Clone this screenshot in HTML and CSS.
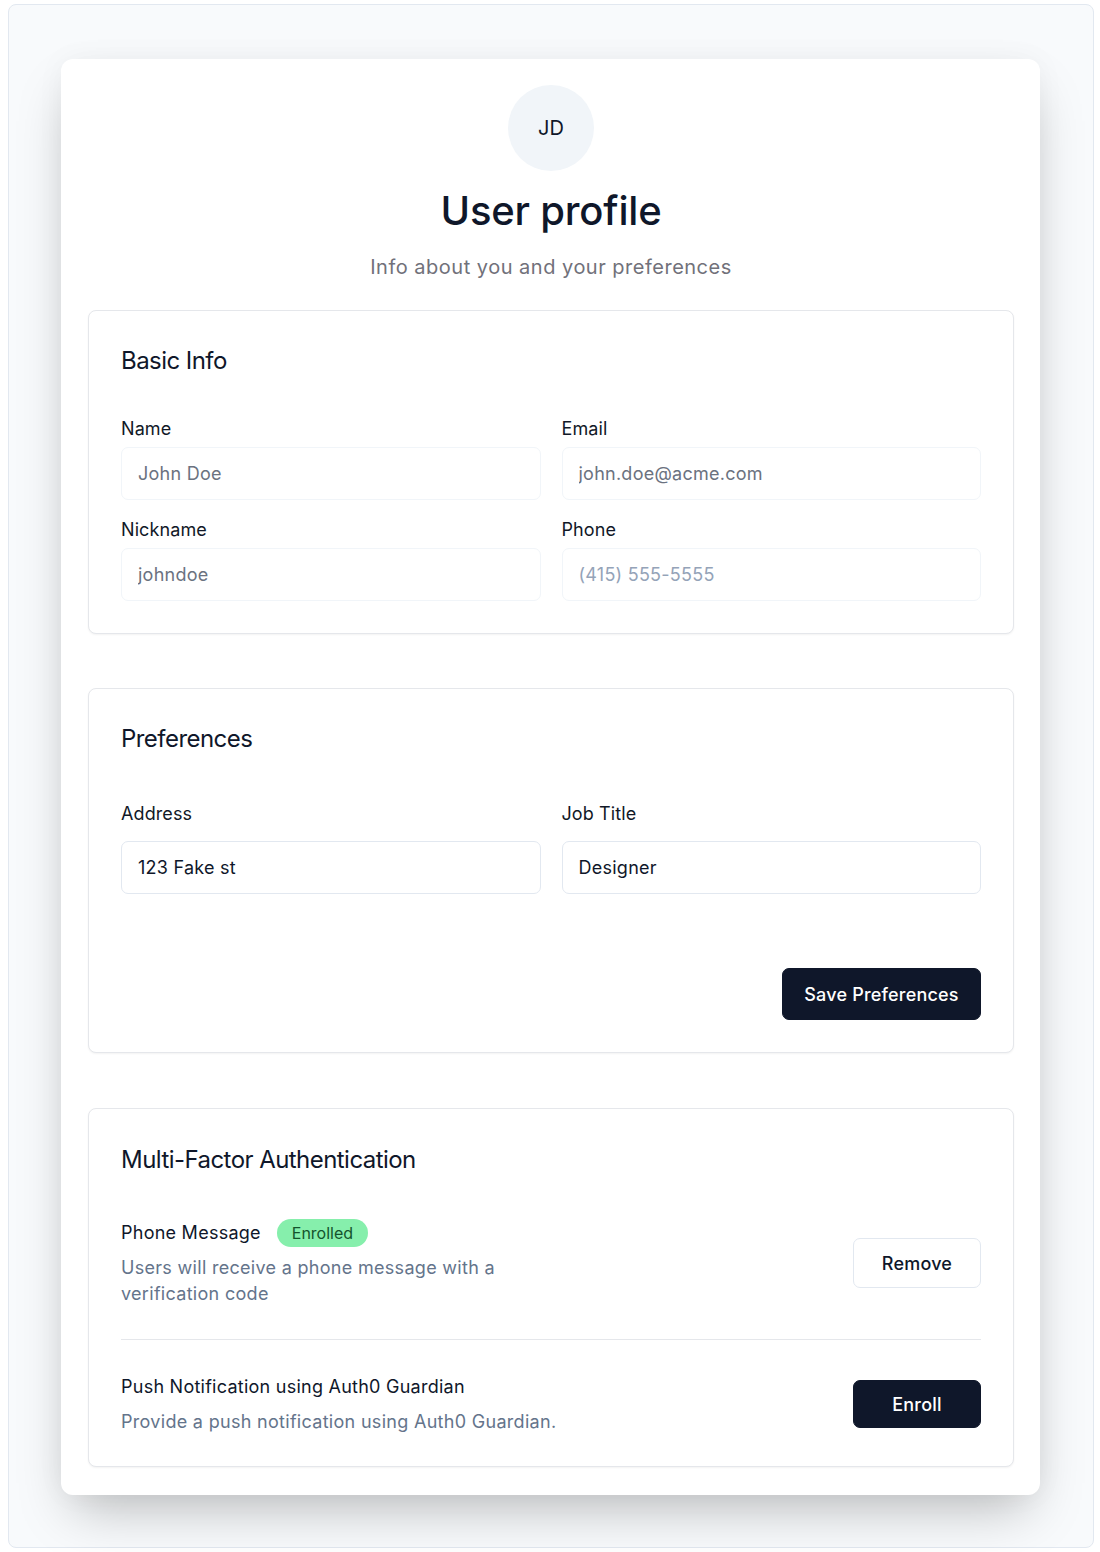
FILE: index.html
```html
<!DOCTYPE html>
<html lang="en">
<head>
<meta charset="utf-8">
<title>User profile</title>
<link rel="stylesheet" href="styles.css">
</head>
<body>
<div class="frame">
  <main class="card">
    <header class="profile-head">
      <div class="avatar">JD</div>
      <h1 class="title">User profile</h1>
      <p class="subtitle">Info about you and your preferences</p>
    </header>

    <section class="panel">
      <h2 class="panel-title basic-title">Basic Info</h2>
      <div class="grid basic-grid">
        <div class="field">
          <label class="label basic-label">Name</label>
          <input class="input disabled" type="text" value="John Doe" disabled>
        </div>
        <div class="field">
          <label class="label basic-label">Email</label>
          <input class="input disabled" type="text" value="john.doe@acme.com" disabled>
        </div>
        <div class="field">
          <label class="label basic-label">Nickname</label>
          <input class="input disabled" type="text" value="johndoe" disabled>
        </div>
        <div class="field">
          <label class="label basic-label">Phone</label>
          <input class="input disabled" type="text" placeholder="(415) 555-5555" disabled>
        </div>
      </div>
    </section>

    <section class="panel">
      <h2 class="panel-title pref-title">Preferences</h2>
      <div class="grid">
        <div class="field">
          <label class="label pref-label">Address</label>
          <input class="input" type="text" value="123 Fake st">
        </div>
        <div class="field">
          <label class="label pref-label">Job Title</label>
          <input class="input" type="text" value="Designer">
        </div>
      </div>
      <div class="actions">
        <button class="btn btn-dark btn-save">Save Preferences</button>
      </div>
    </section>

    <section class="panel panel-mfa">
      <h2 class="panel-title mfa-title">Multi-Factor Authentication</h2>
      <div class="mfa-row first">
        <div class="mfa-text">
          <div class="mfa-name">Phone Message <span class="badge">Enrolled</span></div>
          <p class="mfa-desc">Users will receive a phone message with a verification code</p>
        </div>
        <button class="btn btn-light btn-mfa">Remove</button>
      </div>
      <div class="mfa-row second">
        <div class="mfa-text">
          <div class="mfa-name">Push Notification using Auth0 Guardian</div>
          <p class="mfa-desc">Provide a push notification using Auth0 Guardian.</p>
        </div>
        <button class="btn btn-dark btn-mfa">Enroll</button>
      </div>
    </section>
  </main>
</div>
</body>
</html>
```

FILE: styles.css
```css
* { box-sizing: border-box; }

html, body {
  margin: 0;
  padding: 0;
  background: #ffffff;
}

body {
  font-family: Inter, "Noto Sans", "Liberation Sans", sans-serif;
  color: #0f172a;
}

.frame {
  margin: 4px 6px 4px 8px;
  border: 1px solid #e2e8f0;
  border-radius: 8px;
  background: #f8fafc;
  padding: 54px 53px 52px 52px;
}

.card {
  background: #ffffff;
  border-radius: 12px;
  padding: 26px 26px 28px 27px;
  box-shadow: 0 25px 50px -12px rgba(0, 0, 0, 0.25), 0 0 30px rgba(0, 0, 0, 0.04);
}

.profile-head {
  display: flex;
  flex-direction: column;
  align-items: center;
  margin-bottom: 29px;
}

.avatar {
  width: 86px;
  height: 86px;
  border-radius: 50%;
  background: #f1f5f9;
  display: flex;
  align-items: center;
  justify-content: center;
  font-size: 20px;
  color: #0f172a;
}

.title {
  margin: 16px 0 0;
  font-size: 40px;
  line-height: 48px;
  font-weight: 500;
  color: #0f172a;
  letter-spacing: -0.2px;
}

.subtitle {
  margin: 18px 0 0;
  font-size: 20px;
  line-height: 28px;
  color: #71717a;
  letter-spacing: 0.5px;
}

.panel {
  border: 1px solid #e5e7eb;
  border-radius: 8px;
  padding: 32px;
  box-shadow: 0 1px 2px rgba(0, 0, 0, 0.05);
  background: #ffffff;
}

.panel + .panel {
  margin-top: 54px;
}

.panel + .panel-mfa {
  margin-top: 55px;
  padding-bottom: 31px;
}

.panel-title {
  margin: 0;
  font-size: 24px;
  line-height: 36px;
  font-weight: 400;
  color: #0f172a;
  letter-spacing: -0.55px;
}

.basic-title { margin-bottom: 36px; }
.pref-title { margin-bottom: 43px; }
.mfa-title { margin: 1px 0 41px; }

.grid {
  display: grid;
  grid-template-columns: 1fr 1fr;
  column-gap: 21px;
  row-gap: 16px;
}

.field {
  display: flex;
  flex-direction: column;
}

.label {
  font-size: 18px;
  line-height: 28px;
  color: #111827;
  letter-spacing: 0.1px;
}

.basic-label { margin-bottom: 4px; }
.pref-label { margin-bottom: 13px; }

.input {
  height: 53px;
  width: 100%;
  border: 1px solid #e2e8f0;
  border-radius: 7px;
  padding: 0 16px;
  font-family: inherit;
  font-size: 18px;
  letter-spacing: 0.25px;
  color: #0f172a;
  background: #ffffff;
  outline: none;
}

.input.disabled {
  border-color: #f1f5f9;
  color: #6b7280;
  -webkit-text-fill-color: #6b7280;
  opacity: 1;
}

.input.disabled::placeholder {
  color: #94a3b8;
  -webkit-text-fill-color: #94a3b8;
  opacity: 1;
}

.actions {
  display: flex;
  justify-content: flex-end;
  margin-top: 74px;
}

.btn {
  font-family: inherit;
  font-size: 18px;
  font-weight: 500;
  letter-spacing: 0.2px;
  border-radius: 7px;
  cursor: pointer;
  display: inline-flex;
  align-items: center;
  justify-content: center;
  white-space: nowrap;
  padding: 0;
}

.btn-dark {
  background: #0f172a;
  color: #ffffff;
  border: 1px solid #0f172a;
}

.btn-light {
  background: #ffffff;
  color: #0f172a;
  border: 1px solid #e2e8f0;
}

.btn-save {
  height: 52px;
  width: 199px;
}

.btn-mfa {
  width: 128px;
  flex-shrink: 0;
}

.btn-light.btn-mfa { height: 50px; }
.btn-dark.btn-mfa { height: 48px; }

.mfa-row {
  display: flex;
  align-items: center;
  justify-content: space-between;
}

.mfa-row.first {
  padding-bottom: 32px;
  border-bottom: 1px solid #e5e7eb;
}

.mfa-row.second {
  padding-top: 33px;
}

.mfa-text {
  max-width: 450px;
}

.mfa-name {
  font-size: 18px;
  line-height: 28px;
  color: #0f172a;
  letter-spacing: 0.25px;
  display: flex;
  align-items: center;
  gap: 16px;
}

.badge {
  display: inline-flex;
  align-items: center;
  height: 28px;
  padding: 0 15px;
  border-radius: 14px;
  background: #86efac;
  color: #14532d;
  font-size: 16px;
  letter-spacing: 0;
}

.mfa-desc {
  margin: 8px 0 0;
  font-size: 18px;
  line-height: 26px;
  color: #64748b;
  letter-spacing: 0.3px;
}
```
